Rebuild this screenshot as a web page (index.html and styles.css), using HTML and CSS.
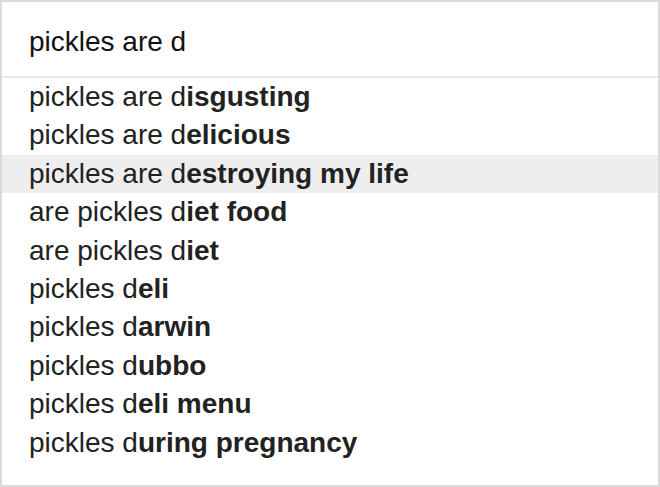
FILE: index.html
```html
<!DOCTYPE html>
<html lang="en">
<head>
  <meta charset="UTF-8" />
  <title>Search suggestions</title>
  <link rel="stylesheet" href="styles.css">
</head>
<body>
  <div class="search-box">
    <div class="search-input">pickles are d</div>
    <ul class="suggestions">
      <li>pickles are d<b>isgusting</b></li>
      <li>pickles are d<b>elicious</b></li>
      <li class="active">pickles are d<b>estroying my life</b></li>
      <li>are pickles d<b>iet food</b></li>
      <li>are pickles d<b>iet</b></li>
      <li>pickles d<b>eli</b></li>
      <li>pickles d<b>arwin</b></li>
      <li>pickles d<b>ubbo</b></li>
      <li>pickles d<b>eli menu</b></li>
      <li>pickles d<b>uring pregnancy</b></li>
    </ul>
  </div>
</body>
</html>
```

FILE: styles.css
```css
html, body {
  margin: 0;
  padding: 0;
  background: #fff;
}

body {
  font-family: 'Liberation Sans', Arial, sans-serif;
  font-size: 28px;
}

.search-box {
  box-sizing: border-box;
  width: 660px;
  height: 487px;
  border: 2px solid #dadada;
  background: #fff;
}

.search-input {
  height: 69px;
  line-height: 69px;
  padding: 5px 0 0 27px;
  color: #111;
  border-bottom: 2px solid #e8e8e8;
  white-space: nowrap;
}

.suggestions {
  list-style: none;
  margin: 0;
  padding: 0;
}

.suggestions li {
  height: 38.4px;
  line-height: 38.4px;
  padding-left: 27px;
  color: #222;
  white-space: nowrap;
}

.suggestions li b {
  font-weight: bold;
}

.suggestions li.active {
  background-color: #eeeeee;
}
```
